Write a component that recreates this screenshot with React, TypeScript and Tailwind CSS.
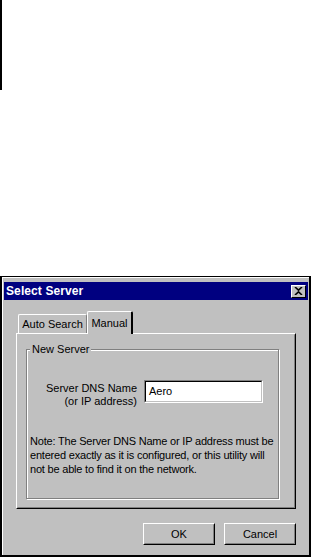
import React from "react";

const font = { fontFamily: '"Liberation Sans", Arial, sans-serif' };

function Btn({ children }: { children: React.ReactNode }) {
  return (
    <div className="w-[72px] h-[22px] border border-t-white border-l-white border-r-black border-b-black">
      <div className="w-full h-full flex items-center justify-center border border-transparent border-r-[#808080] border-b-[#808080] text-[11px] text-black">
        {children}
      </div>
    </div>
  );
}

export default function App() {
  return (
    <div className="w-[311px] h-[558px] bg-white flex flex-col" style={font}>
      <div className="w-[2px] h-[90px] bg-black" />
      <div className="h-[186px]" />
      <div className="w-[311px] h-[281px] bg-[#c0c0c0] border-t border-l-2 border-r-2 border-b-2 border-black flex flex-col">
        <div className="flex-1 flex flex-col border-t border-l border-white">
          {/* title bar */}
          <div className="ml-[1px] mr-[1px] mt-[4px] h-[18px] bg-[#000080] flex items-center justify-between pl-[2px] pr-[2px]">
            <span className="text-white font-bold text-[12px] tracking-[0.1px]">Select Server</span>
            <div className="w-[15px] h-[13px] bg-[#c0c0c0] border border-t-white border-l-white border-r-black border-b-black flex items-center justify-center">
              <svg width="9" height="8" viewBox="0 0 9 8">
                <path d="M1 0 L4.5 3.2 L8 0 M1 8 L4.5 4.8 L8 8" stroke="black" strokeWidth="1.6" fill="none" />
              </svg>
            </div>
          </div>
          {/* tabs */}
          <div className="ml-[13px] mt-[11px] w-[280px] flex flex-col">
            <div className="flex items-end h-[22px] pl-[2px] relative z-10">
              <div className="h-[19px] w-[69px] border-t border-l border-white border-r border-r-[#808080] rounded-tl-[2px] rounded-tr-[2px] flex items-center justify-center text-[11px] text-black">
                Auto Search
              </div>
              <div className="h-[23px] w-[46px] -mb-[1px] bg-[#c0c0c0] border-t border-l border-white border-r-2 border-r-black rounded-tl-[2px] rounded-tr-[2px] flex items-start justify-center pt-[3px] text-[11px] text-black">
                Manual
              </div>
            </div>
            <div className="h-[176px] border border-t-white border-l-white border-r-black border-b-black">
              <div className="h-full border border-transparent border-r-[#808080] border-b-[#808080] pl-[8px] pt-[14px]">
                {/* group box */}
                <div className="relative w-[253px] h-[150px] border border-[#808080] shadow-[inset_1px_1px_0_#fff,1px_1px_0_#fff]">
                  <span className="absolute -top-[8px] left-[3px] px-[2px] bg-[#c0c0c0] text-[11px] text-black leading-[14px]">
                    New Server
                  </span>
                  <div className="flex items-start mt-[30px]">
                    <div className="w-[110px] text-right text-[11px] leading-[13px] text-black pt-[2px]">
                      Server DNS Name
                      <br />
                      (or IP address)
                    </div>
                    <div className="ml-[7px] w-[119px] h-[23px] border border-t-[#808080] border-l-[#808080] border-r-white border-b-white">
                      <div className="h-full border border-t-black border-l-black border-r-[#c0c0c0] border-b-[#c0c0c0] bg-white flex items-center pl-[3px] text-[11px] text-black">
                        Aero
                      </div>
                    </div>
                  </div>
                  <p className="mt-[26px] ml-[3px] w-[248px] text-[11px] leading-[14px] tracking-[-0.2px] text-black">
                    Note: The Server DNS Name or IP address must be entered exactly as it is configured, or this utility will not be able to find it on the network.
                  </p>
                </div>
              </div>
            </div>
          </div>
          {/* buttons */}
          <div className="mt-[14px] ml-[140px] flex gap-[9px]">
            <Btn>OK</Btn>
            <Btn>Cancel</Btn>
          </div>
        </div>
      </div>
    </div>
  );
}
